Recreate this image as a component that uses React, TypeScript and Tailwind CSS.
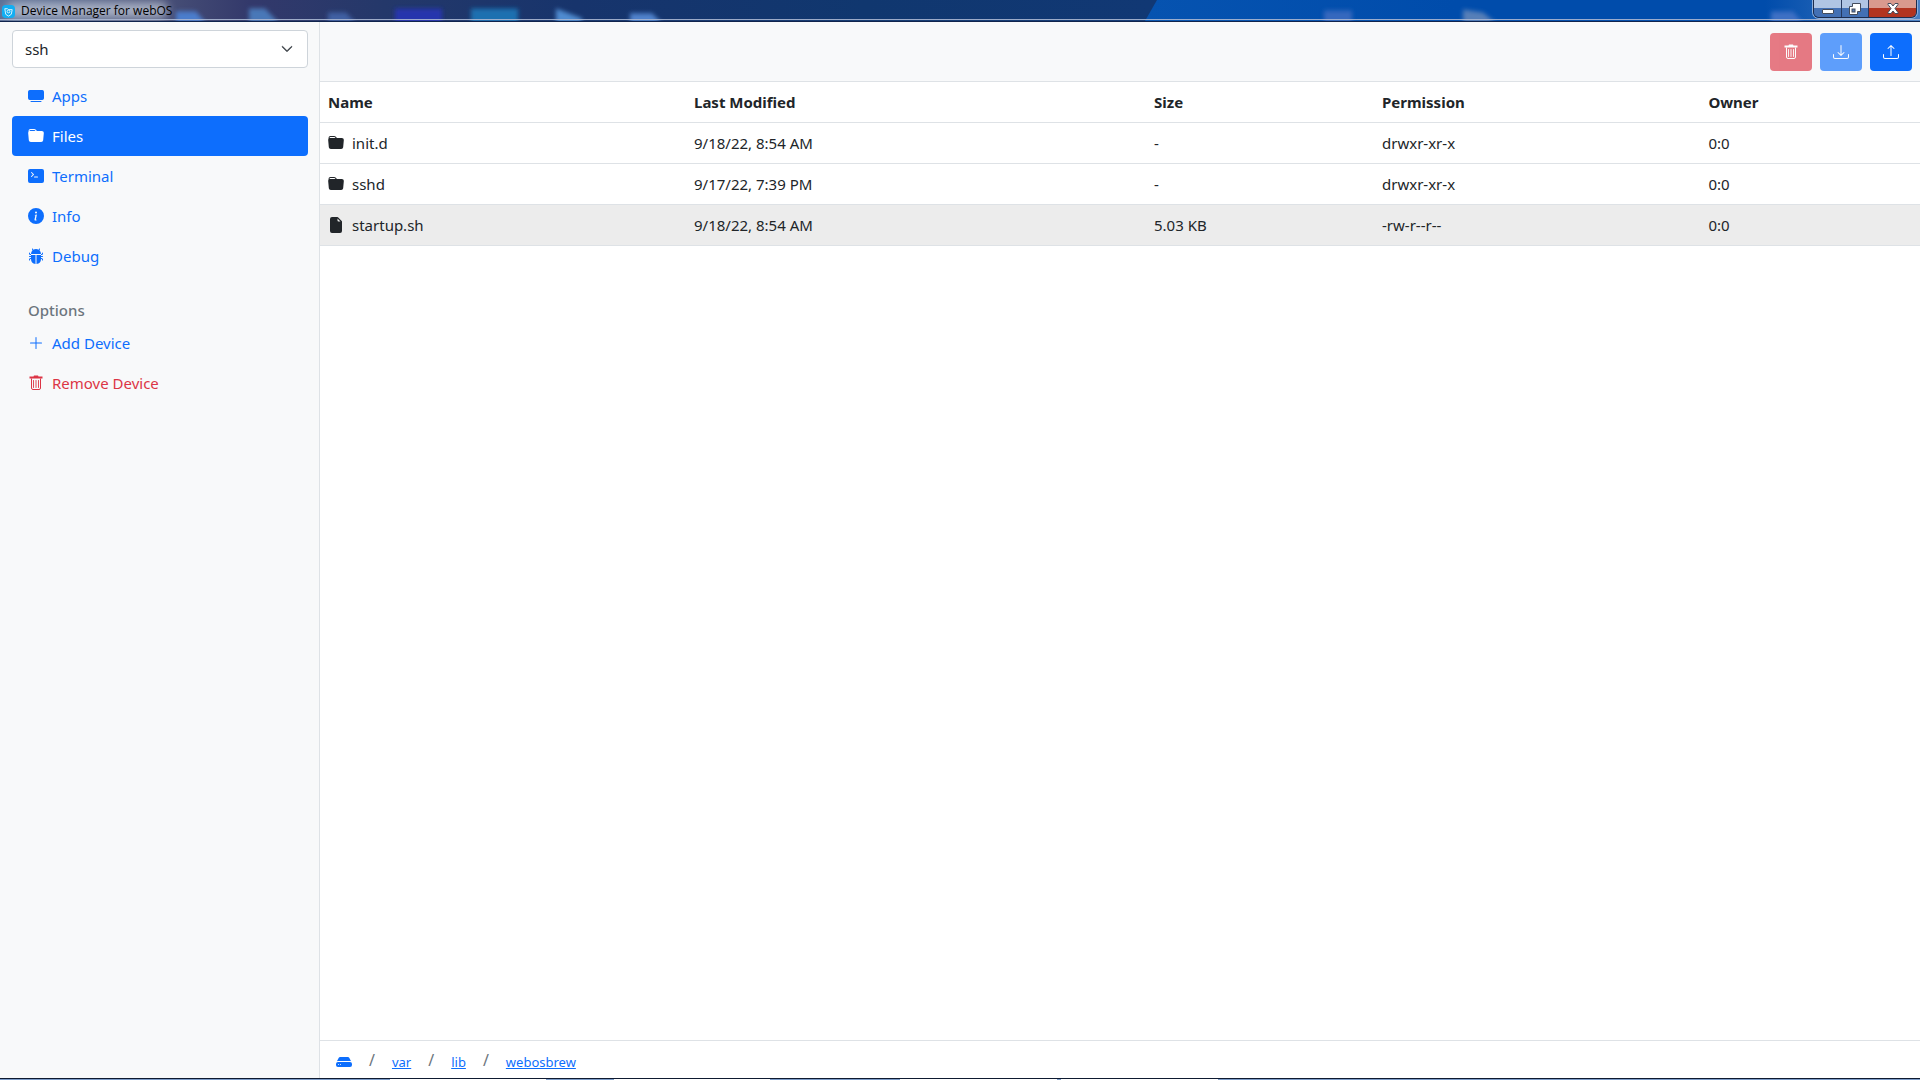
import React, { useState } from 'react';
import {
  BsBugFill,
  BsChevronDown,
  BsDownload,
  BsFileEarmarkFill,
  BsFolderFill,
  BsHddFill,
  BsInfoCircleFill,
  BsPlusLg,
  BsTerminalFill,
  BsTvFill,
  BsUpload,
} from 'react-icons/bs';

const navItems = [
  { id: 'apps', label: 'Apps', icon: BsTvFill },
  { id: 'files', label: 'Files', icon: BsFolderFill },
  { id: 'terminal', label: 'Terminal', icon: BsTerminalFill },
  { id: 'info', label: 'Info', icon: BsInfoCircleFill },
  { id: 'debug', label: 'Debug', icon: BsBugFill },
];

const files = [
  { name: 'init.d', dir: true, modified: '9/18/22, 8:54 AM', size: '-', permission: 'drwxr-xr-x', owner: '0:0' },
  { name: 'sshd', dir: true, modified: '9/17/22, 7:39 PM', size: '-', permission: 'drwxr-xr-x', owner: '0:0' },
  { name: 'startup.sh', dir: false, modified: '9/18/22, 8:54 AM', size: '5.03 KB', permission: '-rw-r--r--', owner: '0:0' },
];

const path = ['var', 'lib', 'webosbrew'];

function TrashIcon() {
  return (
    <svg className="h-4 w-4" viewBox="0 0 16 16" fill="none" stroke="currentColor" aria-hidden="true">
      <path d="M1.500 1.500h4l.5-1h4l.5 1h4v2h-13z" fill="currentColor" stroke="none" />
      <path d="M3.500 3.500v9.500a1.500 1.500 0 0 0 1.500 1.500h6a1.500 1.500 0 0 0 1.500-1.500V3.500" />
      <path d="M5.500 5.500v7M8 5.500v7M10.500 5.500v7" strokeWidth="0.900" strokeLinecap="round" />
    </svg>
  );
}

function TitleBar() {
  return (
    <header className="relative flex h-[22px] shrink-0 items-start justify-between overflow-hidden border-b border-[#10244d] bg-[linear-gradient(90deg,#5b7096_0%,#4a5278_8%,#33396b_13%,#24386a_20%,#17346c_30%,#10376f_45%,#113874_60%)]">
      {/* desktop showing through the glass */}
      <svg className="absolute inset-0 h-full w-full" viewBox="0 0 1920 22" preserveAspectRatio="none" aria-hidden="true">
        <defs>
          <filter id="glass" x="-20%" y="-50%" width="140%" height="200%">
            <feGaussianBlur stdDeviation="2" />
          </filter>
          <filter id="glow" x="-20%" y="-50%" width="140%" height="200%">
            <feGaussianBlur stdDeviation="5" />
          </filter>
          <linearGradient id="sky" x1="0" x2="1">
            <stop offset="0" stopColor="#0653b0" />
            <stop offset="0.4" stopColor="#004cab" />
            <stop offset="0.8" stopColor="#004cab" />
            <stop offset="1" stopColor="#4a80c4" />
          </linearGradient>
        </defs>
        <path d="M1145 22 L1157 0 H1920 V22 Z" fill="url(#sky)" />
        <g filter="url(#glass)">
          <path d="M176 12h20l10 12h-30z" fill="#4c7dcc" />
          <path d="M249 9h16l14 15h-30z" fill="#4a78b8" />
          <path d="M328 13h18l10 11h-28z" fill="#3f60a3" />
          <rect x="395" y="9" width="47" height="16" fill="#2636ad" />
          <rect x="471" y="9" width="47" height="16" fill="#1d6fb0" />
          <path d="M556 9l26 10v5h-26z" fill="#4f8bd0" />
          <path d="M630 14h22l10 10h-32z" fill="#4f82cc" />
          <rect x="1324" y="11" width="28" height="14" fill="#3467be" />
          <path d="M1463 10l20 3 13 11h-33z" fill="#567fb8" />
          <path d="M1771 12h22l10 12h-32z" fill="#3c6fc4" />
        </g>
        <rect x="6" y="2" width="162" height="17" rx="8" fill="#c3cad8" opacity="0.75" filter="url(#glow)" />
        <rect y="20" width="1920" height="1" fill="#a9b6d2" />
      </svg>

      <div className="relative flex items-center gap-1.5 pt-1 pl-[2px] font-['Open_Sans',sans-serif] text-xs leading-[14px] text-black">
        <svg className="h-[13px] w-[13px]" viewBox="0 0 14 14" aria-hidden="true">
          <rect width="14" height="14" rx="4" fill="#12aef2" />
          <path d="M3 4h3l1 1h4l-1 5-3 2-3-2z" fill="none" stroke="#e4f6ff" />
          <circle cx="7" cy="7" r="1.500" fill="none" stroke="#e4f6ff" />
        </svg>
        <span>Device Manager for webOS</span>
      </div>

      <div className="relative mr-[3px] flex h-[18px] overflow-hidden rounded-b-md border border-t-0 border-[#1d2c4d] shadow-[0_0_0_1px_#8fb0dc]">
        <button type="button" aria-label="Minimize" className="flex w-7 items-end justify-center border-r border-[#26395f] bg-linear-to-b from-[#b0c5e4] from-45% to-[#4370b4] to-50% pb-[3px]">
          <svg className="h-[5px] w-3" viewBox="0 0 12 5">
            <rect x="0.5" y="0.5" width="11" height="4" rx="0.5" fill="#fff" stroke="#444c5c" />
          </svg>
        </button>
        <button type="button" aria-label="Restore" className="flex w-[27px] items-center justify-center border-r border-[#26395f] bg-linear-to-b from-[#b0c5e4] from-45% to-[#4370b4] to-50%">
          <svg className="h-3 w-3" viewBox="0 0 12 12">
            <path d="M3.500.5h8v8h-3v3h-8v-8h3z" fill="#fff" stroke="#444c5c" />
            <rect x="3" y="6" width="3" height="3" fill="#5b7fb8" stroke="#444c5c" />
          </svg>
        </button>
        <button type="button" aria-label="Close" className="flex w-[47px] items-center justify-center bg-linear-to-b from-[#d99a8e] from-45% to-[#b23420] to-50%">
          <svg className="h-[11px] w-3" viewBox="0 0 12 11">
            <path d="M1 .5h3l2 2.500 2-2.500h3v1L8 5.500l3 4v1H8L6 8l-2 2.500H1v-1l3-4-3-4z" fill="#fff" stroke="#444c5c" />
          </svg>
        </button>
      </div>
    </header>
  );
}

function Sidebar() {
  const [active, setActive] = useState('files');

  return (
    <aside className="flex w-80 shrink-0 flex-col border-r border-[#dee2e6] bg-[#f8f9fa] px-3 pt-2">
      <div className="relative mb-2 -mr-px">
        <select aria-label="Device" defaultValue="ssh" className="h-[38px] w-full appearance-none rounded border border-[#ced4da] bg-white px-3 text-[#212529]">
          <option value="ssh">ssh</option>
        </select>
        <BsChevronDown className="pointer-events-none absolute top-[13px] right-[15px] h-3 w-3 stroke-1 text-[#343a40]" />
      </div>

      <nav className="-mr-px">
        {navItems.map(({ id, label, icon: Icon }) => (
          <a
            key={id}
            href={`#${id}`}
            onClick={() => setActive(id)}
            className={`flex h-10 items-center gap-2 rounded px-4 ${
              active === id ? 'bg-[#0d6efd] text-white' : 'text-[#0d6efd]'
            }`}
          >
            <Icon className="h-4 w-4" />
            {label}
          </a>
        ))}
      </nav>

      <h6 className="mt-[22px] px-4 font-medium text-[#6c757d]">Options</h6>
      <button type="button" className="mt-px flex h-10 items-center gap-2 px-4 text-[#0d6efd]">
        <BsPlusLg className="h-4 w-4" />
        Add Device
      </button>
      <button type="button" className="flex h-10 items-center gap-2 px-4 text-[#dc3545]">
        <TrashIcon />
        Remove Device
      </button>
    </aside>
  );
}

function Toolbar() {
  return (
    <div className="flex h-[60px] shrink-0 items-center justify-end gap-2 border-b border-[#dee2e6] bg-[#f8f9fa] px-2 text-white">
      <button type="button" disabled aria-label="Delete" className="flex h-[38px] w-[42px] items-center justify-center rounded bg-[#dc3545] opacity-65">
        <TrashIcon />
      </button>
      <button type="button" disabled aria-label="Download" className="flex h-[38px] w-[42px] items-center justify-center rounded bg-[#0d6efd] opacity-65">
        <BsDownload className="h-4 w-4" />
      </button>
      <button type="button" aria-label="Upload" className="flex h-[38px] w-[42px] items-center justify-center rounded bg-[#0d6efd]">
        <BsUpload className="h-4 w-4" />
      </button>
    </div>
  );
}

function FileTable() {
  return (
    <table className="w-full table-fixed border-collapse text-left">
      <colgroup>
        <col className="w-[366px]" />
        <col className="w-[28.75%]" />
        <col className="w-[14.25%]" />
        <col className="w-[20.4%]" />
        <col />
      </colgroup>
      <thead>
        <tr className="h-10 border-b border-[#dee2e6]">
          <th className="px-2">Name</th>
          <th className="px-2">Last Modified</th>
          <th className="px-2">Size</th>
          <th className="px-2">Permission</th>
          <th className="px-2">Owner</th>
        </tr>
      </thead>
      <tbody>
        {files.map((file) => (
          <tr key={file.name} className={`h-[41px] border-b border-[#dee2e6] ${file.dir ? '' : 'bg-[#ececec]'}`}>
            <td className="px-2">
              <span className="flex items-center gap-2">
                {file.dir ? <BsFolderFill className="h-4 w-4" /> : <BsFileEarmarkFill className="h-4 w-4" />}
                {file.name}
              </span>
            </td>
            <td className="px-2">{file.modified}</td>
            <td className="px-2">{file.size}</td>
            <td className="px-2">{file.permission}</td>
            <td className="px-2">{file.owner}</td>
          </tr>
        ))}
      </tbody>
    </table>
  );
}

function PathBar() {
  return (
    <nav aria-label="Path" className="flex h-[38px] shrink-0 items-center border-t border-[#dee2e6] px-4 text-[13px] text-[#0d6efd]">
      <a href="#/" aria-label="Root" className="pt-1">
        <BsHddFill className="h-4 w-4" />
      </a>
      {path.map((part) => (
        <React.Fragment key={part}>
          <span className="px-[17px] text-base text-[#6c757d]">/</span>
          <a href={`#/${part}`} className="pt-1 underline">
            {part}
          </a>
        </React.Fragment>
      ))}
    </nav>
  );
}

/* top edge of the taskbar peeking out under the window */
function TaskbarEdge() {
  return (
    <div className="flex h-[2px] shrink-0 border-t border-[#0e1a30] bg-[#7d9cc8]">
      <div className="w-[390px]" />
      <div className="w-[156px] bg-white" />
      <div className="w-[68px]" />
      <div className="w-[156px] bg-white" />
      <div className="w-[130px]" />
      <div className="w-[157px] bg-white" />
      <div className="w-[4px]" />
      <div className="w-[157px] bg-white" />
    </div>
  );
}

export default function App() {
  return (
    <div className="flex min-h-screen flex-col bg-white font-['Noto_Sans',sans-serif] text-[15px] leading-6 text-[#212529]">
      <TitleBar />
      <div className="flex grow">
        <Sidebar />
        <main className="flex min-w-0 grow flex-col">
          <Toolbar />
          <div className="grow">
            <FileTable />
          </div>
          <PathBar />
        </main>
      </div>
      <TaskbarEdge />
    </div>
  );
}
